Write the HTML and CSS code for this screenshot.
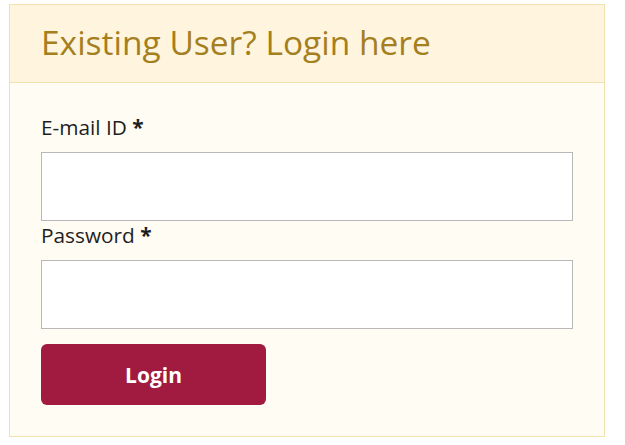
FILE: index.html
```html
<!DOCTYPE html>
<html>
<head>
<meta charset="utf-8">
<link rel="stylesheet" href="styles.css">
</head>
<body>
<div class="panel">
  <div class="panel-head">
    <h2 class="title">Existing User? Login here</h2>
  </div>
  <form class="panel-body">
    <label class="label" for="email">E-mail ID <span class="req">*</span></label>
    <input class="field" id="email" type="text">
    <label class="label" for="pwd">Password <span class="req">*</span></label>
    <input class="field" id="pwd" type="password">
    <button class="btn" type="button">Login</button>
  </form>
</div>
</body>
</html>
```
FILE: styles.css
```css
* { box-sizing: border-box; }
html, body { margin: 0; padding: 0; background: #ffffff; }
body {
  font-family: "Open Sans", "Noto Sans", sans-serif;
  padding: 4px 0 0 9px;
}
.panel {
  width: 596px;
  border: 1px solid #f0e1ae;
  background: #fffcf3;
}
.panel-head {
  height: 78px;
  background: #fff5df;
  border-bottom: 1px solid #f0e1ae;
  padding: 0 31px;
  display: flex;
  align-items: center;
}
.title {
  margin: 0;
  font-size: 33.5px;
  font-weight: 400;
  color: #a57f1e;
  line-height: 1;
  padding-bottom: 2px;
}
.panel-body {
  display: flex;
  flex-direction: column;
  align-items: flex-start;
  padding: 31px 30px 31px 31px;
}
.label {
  font-size: 20.8px;
  line-height: 27px;
  color: #1e1e1e;
  margin-bottom: 11px;
}
.req { font-weight: 700; }
.field {
  width: 532px;
  height: 69px;
  border: 1px solid #b8b8b8;
  background: #fff;
  margin: 0 0 1px 0;
}
#pwd { margin-bottom: 0; }
.btn {
  margin-top: 15px;
  width: 225px;
  height: 61px;
  border: none;
  border-radius: 6px;
  background: #a01b3f;
  color: #fff;
  font-family: "Open Sans", "Noto Sans", sans-serif;
  font-weight: 700;
  font-size: 21px;
}
```
